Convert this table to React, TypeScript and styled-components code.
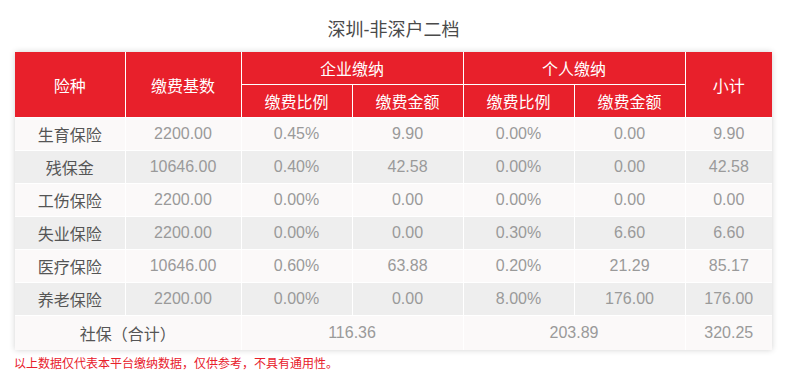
import styled, { createGlobalStyle } from 'styled-components';

const GlobalStyle = createGlobalStyle`
  html, body {
    margin: 0;
    padding: 0;
    background: #ffffff;
  }

  body {
    font-family: "Liberation Sans", Arial, "Noto Sans CJK SC", sans-serif;
  }
`;

const Page = styled.div`
  width: 757px;
  padding: 18px 15px 0;
`;

const Title = styled.h2`
  margin: 0 0 10px;
  font-size: 18px;
  font-weight: normal;
  line-height: 24px;
  text-align: center;
  color: #4a4a4a;
`;

const Table = styled.table`
  width: 757px;
  table-layout: fixed;
  border-collapse: collapse;
  box-shadow: 0 0 6px rgba(0, 0, 0, 0.18);
  font-size: 16px;

  & td, & th {
    height: 32px;
    padding: 0;
    border: 1px solid #fff;
    text-align: center;
    vertical-align: middle;
  }

  & tr:first-child > th { border-top: none; }
  & tr > *:first-child { border-left: none; }
  & tr > *:last-child { border-right: none; }
  & tbody tr:last-child > td { border-bottom: none; height: 34px; }
`;

const Head = styled.th`
  background-color: #e8202b;
  color: #fff;
  font-weight: normal;
`;

const Row = styled.tr<{ striped: boolean }>`
  background-color: ${({ striped }) => (striped ? '#eeeeee' : '#fbf9f9')};
`;

const Cell = styled.td<{ label?: boolean }>`
  color: ${({ label }) => (label ? '#555' : '#9a9a9a')};
`;

const Note = styled.p`
  margin: 5px 0 0 -1px;
  font-size: 12px;
  line-height: 18px;
  color: #e8202b;
`;

const rows = [
  ['生育保险', '2200.00', '0.45%', '9.90', '0.00%', '0.00', '9.90'],
  ['残保金', '10646.00', '0.40%', '42.58', '0.00%', '0.00', '42.58'],
  ['工伤保险', '2200.00', '0.00%', '0.00', '0.00%', '0.00', '0.00'],
  ['失业保险', '2200.00', '0.00%', '0.00', '0.30%', '6.60', '6.60'],
  ['医疗保险', '10646.00', '0.60%', '63.88', '0.20%', '21.29', '85.17'],
  ['养老保险', '2200.00', '0.00%', '0.00', '8.00%', '176.00', '176.00'],
];

export default function App() {
  return (
    <>
      <GlobalStyle />
      <Page>
        <Title>深圳-非深户二档</Title>
        <Table>
          <colgroup>
            <col style={{ width: 110 }} />
            <col style={{ width: 116 }} />
            <col style={{ width: 111 }} />
            <col style={{ width: 111 }} />
            <col style={{ width: 111 }} />
            <col style={{ width: 111 }} />
            <col style={{ width: 87 }} />
          </colgroup>
          <thead>
            <tr>
              <Head rowSpan={2}>险种</Head>
              <Head rowSpan={2}>缴费基数</Head>
              <Head colSpan={2}>企业缴纳</Head>
              <Head colSpan={2}>个人缴纳</Head>
              <Head rowSpan={2}>小计</Head>
            </tr>
            <tr>
              <Head>缴费比例</Head>
              <Head>缴费金额</Head>
              <Head>缴费比例</Head>
              <Head>缴费金额</Head>
            </tr>
          </thead>
          <tbody>
            {rows.map((row, i) => (
              <Row key={row[0]} striped={i % 2 === 1}>
                {row.map((value, j) => (
                  <Cell key={j} label={j === 0}>{value}</Cell>
                ))}
              </Row>
            ))}
            <Row striped={false}>
              <Cell label colSpan={2}>社保（合计）</Cell>
              <Cell colSpan={2}>116.36</Cell>
              <Cell colSpan={2}>203.89</Cell>
              <Cell>320.25</Cell>
            </Row>
          </tbody>
        </Table>
        <Note>以上数据仅代表本平台缴纳数据，仅供参考，不具有通用性。</Note>
      </Page>
    </>
  );
}
